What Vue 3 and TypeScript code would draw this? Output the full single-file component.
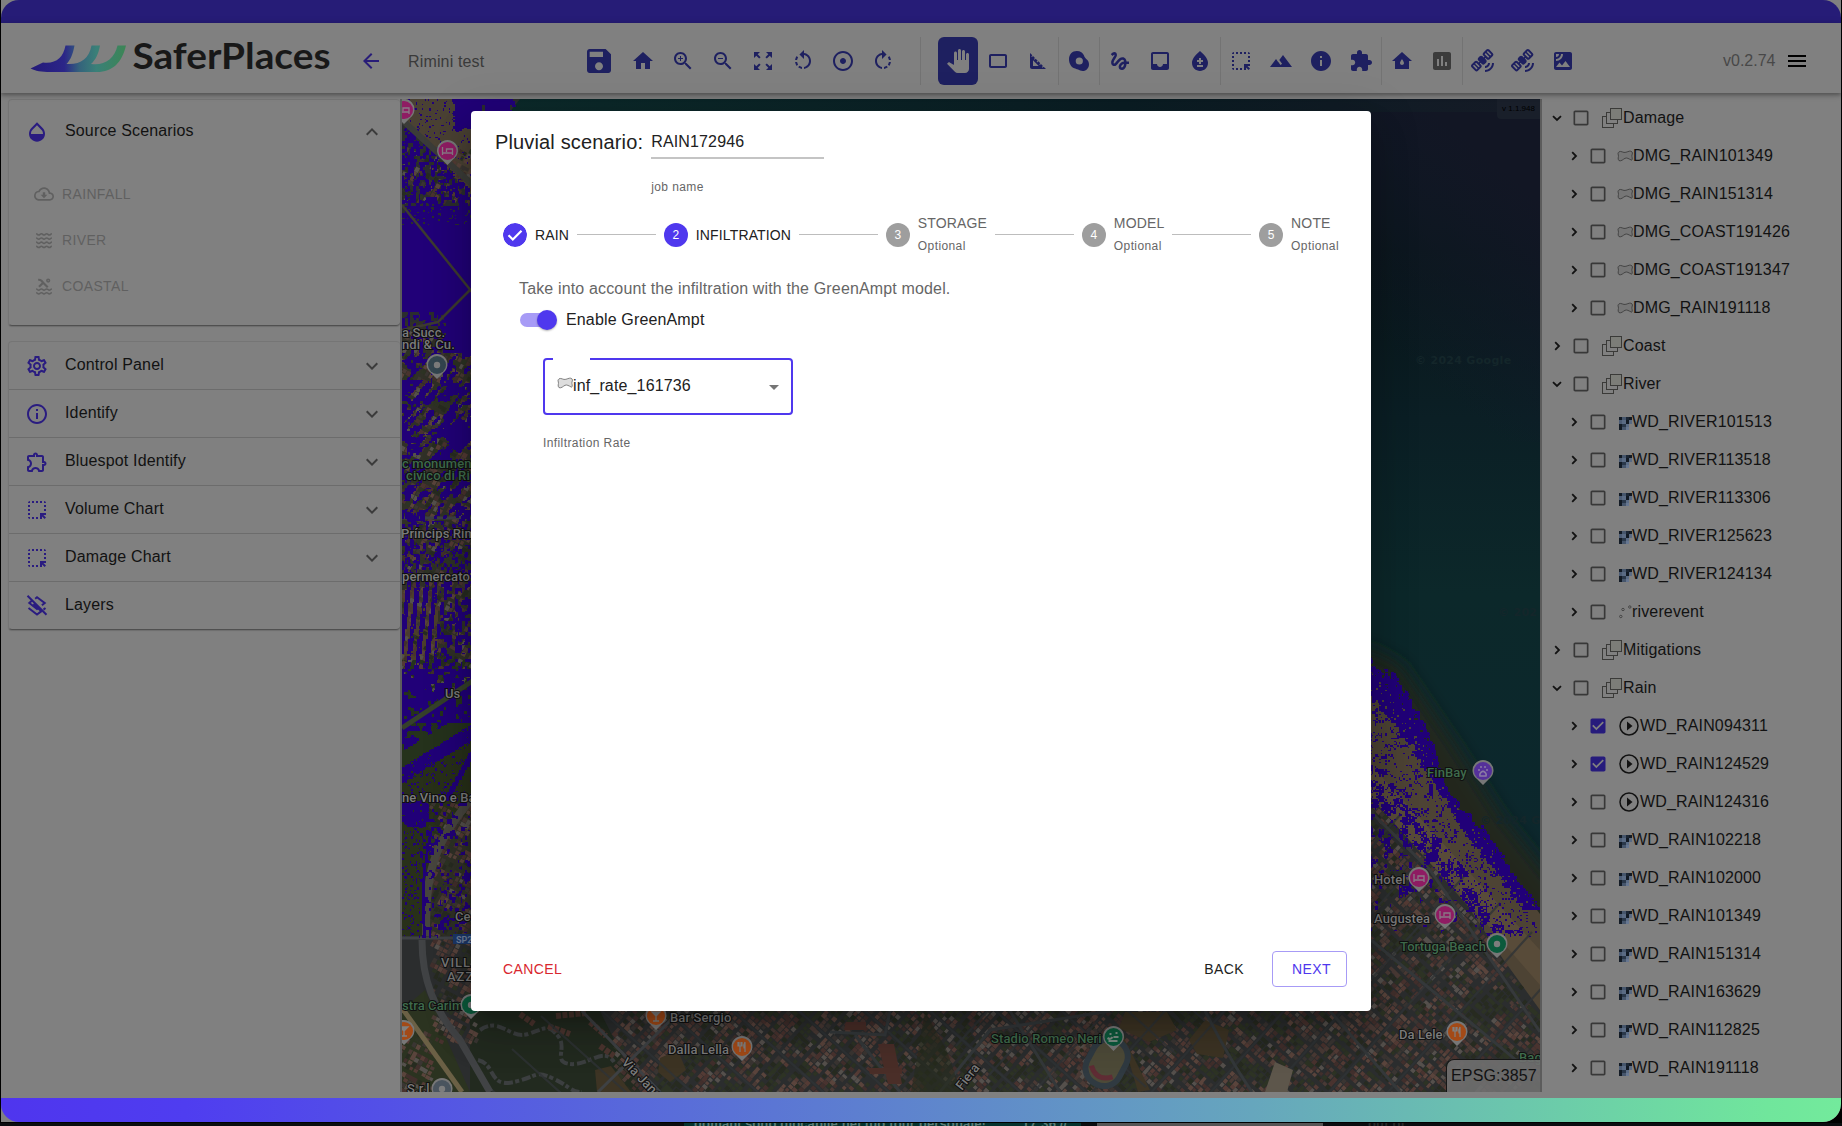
<script setup lang="ts">
interface Tool { icon: string; active?: boolean; muted?: boolean; divider?: boolean }
interface TreeRow { label: string; level: 0 | 1; open?: boolean; checked?: boolean; kind: 'group' | 'polygon' | 'raster' | 'points' | 'play' }
type Pt = [number, number]

const icons: Record<string, string> = {
  save: 'M17 3H5c-1.11 0-2 .9-2 2v14c0 1.1.89 2 2 2h14c1.1 0 2-.9 2-2V7l-4-4zm-5 16c-1.66 0-3-1.34-3-3s1.34-3 3-3 3 1.34 3 3-1.34 3-3 3zm3-10H5V5h10v4z',
  home: 'M10 20v-6h4v6h5v-8h3L12 3 2 12h3v8z',
  zoomIn: 'M15.5 14h-.79l-.28-.27C15.41 12.59 16 11.11 16 9.5 16 5.91 13.09 3 9.5 3S3 5.91 3 9.5 5.91 16 9.5 16c1.61 0 3.09-.59 4.23-1.57l.27.28v.79l5 4.99L20.49 19l-4.99-5zm-6 0C7.01 14 5 11.99 5 9.5S7.01 5 9.5 5 14 7.01 14 9.5 11.99 14 9.5 14zM12 10h-2v2H9v-2H7V9h2V7h1v2h2v1z',
  zoomOut: 'M15.5 14h-.79l-.28-.27C15.41 12.59 16 11.11 16 9.5 16 5.91 13.09 3 9.5 3S3 5.91 3 9.5 5.91 16 9.5 16c1.61 0 3.09-.59 4.23-1.57l.27.28v.79l5 4.99L20.49 19l-4.99-5zm-6 0C7.01 14 5 11.99 5 9.5S7.01 5 9.5 5 14 7.01 14 9.5 11.99 14 9.5 14zM7 9h5v1H7z',
  zoomMap: 'M15 3l2.3 2.3-2.89 2.87 1.42 1.42L18.7 6.7 21 9V3zM3 9l2.3-2.3 2.87 2.89 1.42-1.42L6.7 5.3 9 3H3zm6 12l-2.3-2.3 2.89-2.87-1.42-1.42L5.3 17.3 3 15v6zm12-6l-2.3 2.3-2.87-2.89-1.42 1.42 2.89 2.87L15 21h6z',
  rotateLeft: 'M7.11 8.53L5.7 7.11C4.8 8.27 4.24 9.61 4.07 11h2.02c.14-.87.49-1.72 1.02-2.47zM6.09 13H4.07c.17 1.39.72 2.73 1.62 3.89l1.41-1.42c-.52-.75-.87-1.59-1.01-2.47zm1.01 5.32c1.16.9 2.51 1.44 3.9 1.61V17.9c-.87-.15-1.71-.49-2.46-1.03L7.1 18.32zM13 4.07V1L8.45 5.55 13 10V6.09c2.84.48 5 2.94 5 5.91s-2.16 5.43-5 5.91v2.02c3.95-.49 7-3.85 7-7.93s-3.05-7.44-7-7.93z',
  adjust: 'M12 2C6.49 2 2 6.49 2 12s4.49 10 10 10 10-4.49 10-10S17.51 2 12 2zm0 18c-4.41 0-8-3.59-8-8s3.59-8 8-8 8 3.59 8 8-3.59 8-8 8zm3-8c0 1.66-1.34 3-3 3s-3-1.34-3-3 1.34-3 3-3 3 1.34 3 3z',
  rotateRight: 'M15.55 5.55L11 1v3.07C7.06 4.56 4 7.92 4 12s3.05 7.44 7 7.93v-2.02c-2.84-.48-5-2.94-5-5.91s2.16-5.43 5-5.91V10l4.55-4.45zM19.93 11c-.17-1.39-.72-2.73-1.62-3.89l-1.42 1.42c.54.75.88 1.6 1.02 2.47h2.02zM13 17.9v2.02c1.39-.17 2.74-.71 3.9-1.61l-1.44-1.44c-.75.54-1.59.89-2.46 1.03zm3.89-2.42l1.42 1.41c.9-1.16 1.45-2.5 1.62-3.89h-2.02c-.14.87-.48 1.72-1.02 2.48z',
  pan: 'M23 5.5V20c0 2.2-1.8 4-4 4h-7.3c-1.08 0-2.1-.43-2.85-1.19L1 14.83s1.26-1.23 1.3-1.25c.22-.19.49-.29.79-.29.22 0 .42.06.6.16.04.01 4.31 2.46 4.31 2.46V4c0-.83.67-1.5 1.5-1.5S11 3.17 11 4v7h1V1.5c0-.83.67-1.5 1.5-1.5S15 .67 15 1.5V11h1V2.5c0-.83.67-1.5 1.5-1.5s1.5.67 1.5 1.5V11h1V5.5c0-.83.67-1.5 1.5-1.5s1.5.67 1.5 1.5z',
  rect: 'M19 5H5c-1.1 0-2 .9-2 2v10c0 1.1.9 2 2 2h14c1.1 0 2-.9 2-2V7c0-1.1-.9-2-2-2zm0 12H5V7h14v10z',
  square: 'M17.66 17.66l-1.06 1.06-.71-.71 1.06-1.06-1.94-1.94-1.06 1.06-.71-.71 1.06-1.06-1.94-1.94-1.06 1.06-.71-.71 1.06-1.06L9.7 9.7l-1.06 1.06-.71-.71 1.06-1.06-1.94-1.94-1.06 1.06-.71-.71 1.06-1.06L4 4v14c0 1.1.9 2 2 2h14l-2.34-2.34zM7 17v-5.76L12.76 17H7z',
  blob: 'M9.8 2c3.6 0 6.2 1.7 7.2 4.6.4 1.4 1 2.2 2.2 3.3C21 11.3 22 13 22 15.2c0 3.9-2.7 6.8-6.3 6.8-2 0-3.1-.8-4.7-1.5-1.3-.5-2.3-.6-3.7-1.2C4 17.9 2 14.3 2 10.2 2 5.4 5.2 2 9.8 2zM12.300 8.400a3.600 3.600 0 1 0 0 7.200 3.600 3.600 0 0 0 0-7.200z',
  gesture: 'M4.59 6.89c.7-.71 1.4-1.35 1.71-1.22.5.2 0 1.03-.3 1.52-.25.42-2.86 3.89-2.86 6.31 0 1.28.48 2.34 1.34 2.98.75.56 1.74.73 2.64.46 1.07-.31 1.95-1.4 3.06-2.77 1.21-1.49 2.83-3.44 4.08-3.44 1.63 0 1.65 1.01 1.76 1.79-3.78.64-5.38 3.67-5.38 5.37 0 1.7 1.44 3.09 3.21 3.09 1.63 0 4.29-1.33 4.69-6.1H21v-2.5h-2.47c-.15-1.65-1.09-4.2-4.03-4.2-2.25 0-4.18 1.91-4.94 2.84-.58.73-2.06 2.48-2.29 2.72-.25.3-.68.84-1.11.84-.45 0-.72-.83-.36-1.92.35-1.09 1.4-2.86 1.85-3.52.78-1.14 1.3-1.92 1.3-3.28C8.95 3.69 7.31 3 6.44 3 5.12 3 3.97 4 3.72 4.25c-.36.36-.66.66-.88.93l1.75 1.71zm9.29 11.66c-.31 0-.74-.26-.74-.72 0-.6.73-2.2 2.87-2.76-.3 2.69-1.43 3.48-2.13 3.48z',
  inbox: 'M19 3H4.99c-1.11 0-1.98.89-1.98 2L3 19c0 1.1.88 2 1.99 2H19c1.1 0 2-.9 2-2V5c0-1.11-.9-2-2-2zm0 12h-4c0 1.66-1.35 3-3 3s-3-1.34-3-3H4.99V5H19v10z',
  drop: 'M12 2c-5.33 4.55-8 8.48-8 11.8 0 4.98 3.8 8.2 8 8.2s8-3.22 8-8.2c0-3.32-2.67-7.25-8-11.8zM15 18H9v-2h6v2zM15 13h-2v2h-2v-2H9v-2h2V9h2v2h2v2z',
  select: 'M17 5h-2V3h2v2zm-2 16h2v-2.59L19.59 21 21 19.59 18.41 17H21v-2h-6v6zm4-12h2V7h-2v2zm0 4h2v-2h-2v2zm-8 8h2v-2h-2v2zM7 5h2V3H7v2zM3 17h2v-2H3v2zm2 4v-2H3c0 1.1.9 2 2 2zM19 3v2h2c0-1.1-.9-2-2-2zm-8 2h2V3h-2v2zM3 9h2V7H3v2zm4 12h2v-2H7v2zm-4-8h2v-2H3v2zm0-8h2V3c-1.1 0-2 .9-2 2z',
  mountain: 'M14 6l-3.75 5 2.85 3.8-1.6 1.2C9.81 13.75 7 10 7 10l-6 8h22L14 6z',
  info: 'M12 2C6.48 2 2 6.48 2 12s4.48 10 10 10 10-4.48 10-10S17.52 2 12 2zm1 15h-2v-6h2v6zm0-8h-2V7h2v2z',
  puzzle: 'M20.5 11H19V7c0-1.1-.9-2-2-2h-4V3.5C13 2.12 11.88 1 10.5 1S8 2.12 8 3.5V5H4c-1.1 0-1.99.9-1.99 2v3.8H3.5c1.49 0 2.7 1.21 2.7 2.7s-1.21 2.7-2.7 2.7H2V20c0 1.1.9 2 2 2h3.8v-1.5c0-1.49 1.21-2.7 2.7-2.7 1.49 0 2.7 1.21 2.7 2.7V22H17c1.1 0 2-.9 2-2v-4h1.5c1.38 0 2.5-1.12 2.5-2.5S21.88 11 20.5 11z',
  waterHome: 'M12 3L2 12h3v8h14v-8h3L12 3zm0 13c-1.1 0-2-.9-2-2s2-4 2-4 2 2.9 2 4-.9 2-2 2z',
  assessment: 'M19 3H5c-1.1 0-2 .9-2 2v14c0 1.1.9 2 2 2h14c1.1 0 2-.9 2-2V5c0-1.1-.9-2-2-2zM9 17H7v-7h2v7zm4 0h-2V7h2v10zm4 0h-2v-4h2v4z',
  satellite: 'M21 14h2c0 4.97-4.03 9-9 9v-2c3.87 0 7-3.13 7-7zm-7 3v2c2.76 0 5-2.24 5-5h-2c0 1.66-1.34 3-3 3zM18.26.59l3.54 3.54c.78.78.78 2.05 0 2.83l-3.18 3.18c-.78.78-2.05.78-2.83 0l-1.24-1.24-.71.7 1.24 1.24c.78.78.78 2.05 0 2.83l-1.41 1.41c-.78.78-2.05.78-2.83 0L9.6 13.84l-.71.71 1.24 1.24c.78.78.78 2.05 0 2.83L6.95 21.8c-.78.78-2.05.78-2.83 0L.58 18.26c-.78-.78-.78-2.05 0-2.83l3.18-3.18c.78-.78 2.05-.78 2.83 0l1.24 1.24.71-.71-1.24-1.23c-.78-.78-.78-2.05 0-2.83L8.71 7.3c.78-.78 2.05-.78 2.83 0l1.24 1.24.71-.71-1.24-1.24c-.78-.78-.78-2.05 0-2.83L15.43.59c.79-.79 2.05-.79 2.83 0zM16.84 2l-1.06 1.06 3.54 3.54 1.06-1.06L16.84 2zM14.72 4.12l-1.06 1.06 3.54 3.54 1.06-1.06-3.54-3.54zM5.17 13.67L4.11 14.73l3.54 3.54 1.06-1.06-3.54-3.54zM3.05 15.79L1.99 16.85l3.54 3.54 1.06-1.06-3.54-3.54z',
  imagery: 'M19 3H5c-1.1 0-2 .9-2 2v14c0 1.1.9 2 2 2h14c1.1 0 2-.9 2-2V5c0-1.1-.9-2-2-2zM5 4.99h3C8 6.65 6.66 8 5 8V4.99zM5 12v-2c2.76 0 5-2.25 5-5.01h2C12 8.86 8.87 12 5 12zm0 6l3.5-4.5 2.5 3.01L14.5 12l4.5 6H5z',
  back: 'M20 11H7.83l5.59-5.59L12 4l-8 8 8 8 1.41-1.41L7.83 13H20v-2z',
  menu: 'M3 18h18v-2H3v2zm0-5h18v-2H3v2zm0-7v2h18V6H3z',
  opacity: 'M17.66 8L12 2.35 6.34 8C4.78 9.56 4 11.64 4 13.64s.78 4.11 2.34 5.67 3.61 2.35 5.66 2.35 4.1-.79 5.66-2.35S20 15.64 20 13.64 19.22 9.56 17.66 8zM6 14c.01-2 .62-3.27 1.76-4.4L12 5.27l4.24 4.38C17.38 10.77 17.99 12 18 14H6z',
  up: 'M12 8l-6 6 1.41 1.41L12 10.83l4.59 4.58L18 14z',
  down: 'M16.59 8.59L12 13.17 7.41 8.59 6 10l6 6 6-6z',
  cloud: 'M19.35 10.04C18.67 6.59 15.64 4 12 4 9.11 4 6.6 5.64 5.35 8.04 2.34 8.36 0 10.91 0 14c0 3.31 2.69 6 6 6h13c2.76 0 5-2.24 5-5 0-2.64-2.05-4.78-4.65-4.96zM19 18H6c-2.21 0-4-1.79-4-4 0-2.05 1.53-3.76 3.56-3.97l1.07-.11.5-.95C8.08 7.14 9.94 6 12 6c2.62 0 4.88 1.86 5.39 4.43l.3 1.5 1.53.11c1.56.1 2.78 1.41 2.78 2.96 0 1.65-1.35 3-3 3zm-5.55-8h-2.9v3H8l4 4 4-4h-2.55z',
  settings: 'M19.43 12.98c.04-.32.07-.64.07-.98 0-.34-.03-.66-.07-.98l2.11-1.65c.19-.15.24-.42.12-.64l-2-3.46c-.09-.16-.26-.25-.44-.25-.06 0-.12.01-.17.03l-2.49 1c-.52-.4-1.08-.73-1.69-.98l-.38-2.65C14.46 2.18 14.25 2 14 2h-4c-.25 0-.46.18-.49.42l-.38 2.65c-.61.25-1.17.59-1.69.98l-2.49-1c-.06-.02-.12-.03-.18-.03-.17 0-.34.09-.43.25l-2 3.46c-.13.22-.07.49.12.64l2.11 1.65c-.04.32-.07.65-.07.98 0 .33.03.66.07.98l-2.11 1.65c-.19.15-.24.42-.12.64l2 3.46c.09.16.26.25.44.25.06 0 .12-.01.17-.03l2.49-1c.52.4 1.08.73 1.69.98l.38 2.65c.03.24.24.42.49.42h4c.25 0 .46-.18.49-.42l.38-2.65c.61-.25 1.17-.59 1.69-.98l2.49 1c.06.02.12.03.18.03.17 0 .34-.09.43-.25l2-3.46c.12-.22.07-.49-.12-.64l-2.11-1.65zm-1.98-1.71c.04.31.05.52.05.73 0 .21-.02.43-.05.73l-.14 1.13.89.7 1.08.84-.7 1.21-1.27-.51-1.04-.42-.9.68c-.43.32-.84.56-1.25.73l-1.06.43-.16 1.13-.2 1.35h-1.4l-.19-1.35-.16-1.13-1.06-.43c-.43-.18-.83-.41-1.23-.71l-.91-.7-1.06.43-1.27.51-.7-1.21 1.08-.84.89-.7-.14-1.13c-.03-.31-.05-.54-.05-.74s.02-.43.05-.73l.14-1.13-.89-.7-1.08-.84.7-1.21 1.27.51 1.04.42.9-.68c.43-.32.84-.56 1.25-.73l1.06-.43.16-1.13.2-1.35h1.39l.19 1.35.16 1.13 1.06.43c.43.18.83.41 1.23.71l.91.7 1.06-.43 1.27-.51.7 1.21-1.07.85-.89.7.14 1.13zM12 8c-2.21 0-4 1.79-4 4s1.79 4 4 4 4-1.79 4-4-1.79-4-4-4zm0 6c-1.1 0-2-.9-2-2s.9-2 2-2 2 .9 2 2-.9 2-2 2z',
  infoOutline: 'M11 7h2v2h-2zm0 4h2v6h-2zm1-9C6.48 2 2 6.48 2 12s4.48 10 10 10 10-4.48 10-10S17.52 2 12 2zm0 18c-4.41 0-8-3.59-8-8s3.59-8 8-8 8 3.59 8 8-3.59 8-8 8z',
  puzzleOutline: 'M10.5 4.5c.28 0 .5.22.5.5v2h6v6h2c.28 0 .5.22.5.5s-.22.5-.5.5h-2v6h-2.12c-.68-1.75-2.39-3-4.38-3s-3.7 1.25-4.38 3H4v-2.12c1.75-.68 3-2.39 3-4.38 0-1.99-1.24-3.7-2.99-4.38L4 7h6V5c0-.28.22-.5.5-.5m0-2C9.12 2.5 8 3.62 8 5H4c-1.1 0-1.99.9-1.99 2v3.8h.29c1.49 0 2.7 1.21 2.7 2.7s-1.21 2.7-2.7 2.7H2V20c0 1.1.9 2 2 2h3.8v-.3c0-1.49 1.21-2.7 2.7-2.7s2.7 1.21 2.7 2.7v.3H17c1.1 0 2-.9 2-2v-4c1.38 0 2.5-1.12 2.5-2.5S20.38 11 19 11V7c0-1.1-.9-2-2-2h-4c0-1.38-1.12-2.5-2.5-2.5z',
  box: 'M19 5v14H5V5h14m0-2H5c-1.1 0-2 .9-2 2v14c0 1.1.9 2 2 2h14c1.1 0 2-.9 2-2V5c0-1.1-.9-2-2-2z',
  boxChecked: 'M19 3H5c-1.11 0-2 .9-2 2v14c0 1.1.89 2 2 2h14c1.11 0 2-.9 2-2V5c0-1.1-.89-2-2-2zm-9 14l-5-5 1.41-1.41L10 14.17l7.59-7.59L19 8l-9 9z',
  waves: 'M2.5 4.5c1.6 0 1.6 1.5 3.2 1.5s1.6-1.5 3.2-1.5S10.4 6 12 6s1.6-1.5 3.2-1.5S16.8 6 18.4 6s1.5-1.5 3.1-1.5M2.5 9.5c1.6 0 1.6 1.5 3.2 1.5s1.6-1.5 3.2-1.5S10.4 11 12 11s1.6-1.5 3.2-1.5 1.6 1.5 3.2 1.5 1.5-1.5 3.1-1.5M2.5 14.5c1.6 0 1.6 1.5 3.2 1.5s1.6-1.5 3.2-1.5S10.4 16 12 16s1.6-1.5 3.2-1.5 1.6 1.5 3.2 1.5 1.5-1.5 3.1-1.5M2.5 19.5c1.6 0 1.6 1.5 3.2 1.5s1.6-1.5 3.2-1.5S10.4 21 12 21s1.6-1.5 3.2-1.5 1.6 1.5 3.2 1.5 1.5-1.5 3.1-1.5',
}
const polygonShape = 'M1.5 1.5C4 0 6 3 9 2s5-2 6.5-.5-.5 3 0 5 .5 4-.5 4C12 9 10 7.500 8 8.500S4 12 1.500 11C-.5 9 1.500 7 .8 5S.5 2.500 1.500 1.500z'

const viewTools: Tool[] = [
  { icon: 'home' }, { icon: 'zoomIn' }, { icon: 'zoomOut' }, { icon: 'zoomMap' },
  { icon: 'rotateLeft' }, { icon: 'adjust' }, { icon: 'rotateRight' },
]
const editTools: Tool[] = [
  { icon: 'pan', active: true }, { icon: 'rect' }, { icon: 'square' },
  { icon: 'blob', divider: true },
  { icon: 'gesture', divider: true }, { icon: 'inbox' }, { icon: 'drop' },
  { icon: 'select', divider: true }, { icon: 'mountain' }, { icon: 'info' }, { icon: 'puzzle' },
  { icon: 'waterHome', divider: true }, { icon: 'assessment', muted: true },
  { icon: 'satellite', divider: true }, { icon: 'satellite' }, { icon: 'imagery' },
]
const panels = [
  { label: 'Control Panel', icon: 'settings' },
  { label: 'Identify', icon: 'infoOutline' },
  { label: 'Bluespot Identify', icon: 'puzzleOutline' },
  { label: 'Volume Chart', icon: 'select' },
  { label: 'Damage Chart', icon: 'select' },
  { label: 'Layers', icon: '' },
]
const leaf = (kind: TreeRow['kind'], checked = false) => (label: string): TreeRow => ({ label, level: 1, kind, checked })
const tree: TreeRow[] = [
  { label: 'Damage', level: 0, kind: 'group', open: true },
  ...['DMG_RAIN101349', 'DMG_RAIN151314', 'DMG_COAST191426', 'DMG_COAST191347', 'DMG_RAIN191118'].map(leaf('polygon')),
  { label: 'Coast', level: 0, kind: 'group' },
  { label: 'River', level: 0, kind: 'group', open: true },
  ...['WD_RIVER101513', 'WD_RIVER113518', 'WD_RIVER113306', 'WD_RIVER125623', 'WD_RIVER124134'].map(leaf('raster')),
  leaf('points')('riverevent'),
  { label: 'Mitigations', level: 0, kind: 'group' },
  { label: 'Rain', level: 0, kind: 'group', open: true },
  ...['WD_RAIN094311', 'WD_RAIN124529'].map(leaf('play', true)),
  leaf('play')('WD_RAIN124316'),
  ...['WD_RAIN102218', 'WD_RAIN102000', 'WD_RAIN101349', 'WD_RAIN151314', 'WD_RAIN163629', 'WD_RAIN112825', 'WD_RAIN191118'].map(leaf('raster')),
]
const steps = [
  { label: 'RAIN', state: 'done' },
  { label: 'INFILTRATION', state: 'active' },
  { label: 'STORAGE', state: 'todo' },
  { label: 'MODEL', state: 'todo' },
  { label: 'NOTE', state: 'todo' },
]
const rasterCells = [
  [0, 0, '#121a24'], [1, 0, '#46566c'], [2, 0, '#1b2634'], [3, 0, '#121a24'],
  [0, 1, '#4c5c74'], [1, 1, '#5a6b84'], [2, 1, '#121a24'], [3, 1, '#5a6b84'],
  [0, 2, '#121a24'], [1, 2, '#2a384a'], [2, 2, '#5a6b84'],
  [0, 3, '#121a24'], [1, 3, '#46566c'], [2, 3, '#667690'],
] as [number, number, string][]

/* ---------- map scene ---------- */
function hash(x: number, y: number): number {
  let h = (Math.imul(x | 0, 374761393) + Math.imul(y | 0, 668265263)) | 0
  h = Math.imul(h ^ (h >>> 13), 1274126177)
  return ((h ^ (h >>> 16)) >>> 0) / 4294967296
}
function noise(x: number, y: number): number {
  const xi = Math.floor(x), yi = Math.floor(y)
  const fx = x - xi, fy = y - yi
  const u = fx * fx * (3 - 2 * fx), v = fy * fy * (3 - 2 * fy)
  const a = hash(xi, yi) * (1 - u) + hash(xi + 1, yi) * u
  const b = hash(xi, yi + 1) * (1 - u) + hash(xi + 1, yi + 1) * u
  return a * (1 - v) + b * v
}
function along(points: Pt[], x: number): number {
  for (let i = 1; i < points.length; i++) {
    const [x0, y0] = points[i - 1], [x1, y1] = points[i]
    if (x <= x1) return y0 + ((x - x0) / (x1 - x0)) * (y1 - y0)
  }
  return points[points.length - 1][1]
}
const outer: Pt[] = [[1370, 660], [1376, 668], [1395, 675], [1417, 710], [1433, 747], [1448, 792], [1460, 805], [1490, 836], [1510, 870], [1540, 908]]
const inner: Pt[] = [[1370, 696], [1410, 744], [1457, 822], [1507, 888], [1540, 930]]
const inland: Pt[] = [[1370, 798], [1393, 822], [1427, 860], [1467, 905], [1503, 959], [1540, 1010]]

const roofColors = ['#49332f', '#543b35', '#412f2c', '#5a443c', '#4a3a35', '#55504c', '#272b20', '#3a3532', '#2d3324']
const roofs: string[] = roofColors.map(() => '')
let lanes = ''
/* lays out rows of small roofs on a rotated street lattice */
function city(x0: number, y0: number, x1: number, y1: number, deg: number, inside: (x: number, y: number) => boolean) {
  const a = (deg * Math.PI) / 180, c = Math.cos(a), s = Math.sin(a)
  const cx = (x0 + x1) / 2, cy = (y0 + y1) / 2
  const r = Math.hypot(x1 - x0, y1 - y0) / 2
  const n = Math.ceil(r / 4.5)
  for (let j = -n; j <= n; j++) {
    for (let i = -n; i <= n; i++) {
      const u = i * 4.5 + Math.floor(i / 9) * 3.500, v = j * 5 + Math.floor(j / 4) * 3
      const x = cx + u * c - v * s, y = cy + u * s + v * c
      if (x < x0 - 4 || x > x1 + 4 || y < y0 - 4 || y > y1 + 4 || !inside(x, y)) continue
      const h = hash(i + 400, j + 900 + x0)
      if (h < 0.05) continue
      const green = noise(x / 16, y / 16) > 0.74
      const k = green ? (h > 0.5 ? 6 : 8) : Math.floor(((h - 0.05) / 0.95) * 8.99)
      const w = 3 + hash(i, j) * 1.8, l = 3.2 + hash(j, i) * 2
      roofs[k] += `M${x.toFixed(1)} ${y.toFixed(1)}l${(w * c).toFixed(1)} ${(w * s).toFixed(1)}l${(-l * s).toFixed(1)} ${(l * c).toFixed(1)}l${(-w * c).toFixed(1)} ${(-w * s).toFixed(1)}z`
    }
  }
  if (x1 - x0 < 300) return
  for (let k = -Math.ceil(r / 44); k <= Math.ceil(r / 44); k++) {
    const u = k * 44 - 1.800
    lanes += `M${(cx + u * c + r * s).toFixed(0)} ${(cy + u * s - r * c).toFixed(0)}L${(cx + u * c - r * s).toFixed(0)} ${(cy + u * s + r * c).toFixed(0)}`
  }
}
city(402, 150, 474, 1092, 28, (x, y) => y < 200 || (y > 330 && y < 690) || (y > 800 && x > 428 + (y - 800) * 0.02 && y < 1040) || (y > 1030 && x < 432))
city(600, 1008, 1090, 1092, -48, (x) => x > 610)
city(1080, 1006, 1542, 1092, 42, (x, y) => x < 1371 || y > along(inland, x))
city(1368, 790, 1542, 1010, 44, (x, y) => y > along(inland, x) && y < 1004)

const step = 1.5
function floods(x: number, y: number): boolean {
  const h = hash(Math.round(x / step), Math.round(y / step))
  if (x > 1300) {
    const edge = along(outer, x) + (noise(x / 3, y / 3) - 0.5) * 12
    const low = along(inner, x) + (noise(x / 4, y / 4) - 0.5) * 12
    if (y < edge) return false
    if (y < low) return h > 0.07
    const land = along(inland, x)
    if (y < land) return h < 0.08 + (noise(x / 5, y / 5) > 0.7 ? 0.55 : 0) + (land - y < 34 && noise(x / 6, y / 9) > 0.52 ? 0.7 : 0)
    return noise(x / 5, y / 5) > 0.56 + (y - 800) / 420 && h > 0.2
  }
  if (y < 112 && x > 474) return x < 517 - noise(x / 3, y / 3) * 8 && !(x > 480 && x < 484 && y > 104)
  const n = noise(x / 4, y / 4), f = noise(x / 2.6, y / 3.4), m = noise(x / 11 + 40, y / 11)
  if (y < 190 && x - 402 > (y - 118) * 0.95) return x > 455 - n * 6 && y < 124 + n * 8 ? true : h < 0.07
  if (y < 225) return f > 0.34 + (y > 205 ? -0.15 : 0.08) && h > 0.05
  if (y < 312) return true
  if (y < 352) return x > 438 + n * 8 || f > 0.55
  if (y < 520) {
    if (Math.abs(x - 458) + Math.abs(y - 434) * 0.9 < 17) return true
    return noise((x + y) / 5, (x - y) / 16) > (m > 0.5 ? 0.42 : 0.58) && f > 0.2
  }
  if (y < 578) return f > 0.55 && h > 0.12
  if (y < 668) return x < 436 ? Math.sin((x + y * 0.12) * 0.7) > -0.1 && h > 0.08 : f > 0.56
  if (y < 722) return n < 0.74
  if (y < 800) {
    const d = y - (778 - (x - 402) * 0.62)
    if (Math.abs(d + 4) < 8) return h > 0.05
    if (d < -12) return d > -28 ? false : n > 0.5
    return h < 0.1 || (x > 440 && Math.abs(x - (500 - (y - 700) * 0.55)) < 3)
  }
  if (y < 826) return x < 432 && Math.hypot(x - 414, (y - 811) * 0.9) < 15 ? h > 0.04 : n > 0.72
  if (y < 937) return Math.abs(x - (422 + Math.pow((900 - y) / 24, 2))) < 1.5 || (x < 420 ? h < 0.14 : f > 0.68)
  return false
}
function floodPath(x0: number, y0: number, x1: number, y1: number): string {
  let d = ''
  for (let y = y0; y < y1; y += step) {
    let start = -1
    for (let x = x0; x <= x1; x += step) {
      const on = x < x1 && floods(x, y)
      if (on && start < 0) start = x
      else if (!on && start >= 0) { d += `M${start} ${y}H${x}v${step}H${start}z`; start = -1 }
    }
  }
  return d
}
const floodPaths = [floodPath(402, 99, 474, 937), floodPath(474, 99, 520, 112), floodPath(1370, 655, 1540, 937)]

const pins = [
  { x: 404, y: 110, c: '#8f1c63', g: 'bed' }, { x: 447.5, y: 151, c: '#8f1c63', g: 'bed' },
  { x: 437, y: 365, c: '#33454f', g: 'dot' }, { x: 471, y: 1005, c: '#0b5a3c', g: 'dot' },
  { x: 404, y: 1031, c: '#a34a17', g: 'bar' }, { x: 442, y: 1089, c: '#4a545e', g: 'dot' },
  { x: 656, y: 1016, c: '#a34a17', g: 'bar' }, { x: 742, y: 1047, c: '#a34a17', g: 'fork' },
  { x: 1113.5, y: 1037, c: '#0b5a3c', g: 'fans' }, { x: 1457, y: 1032, c: '#a34a17', g: 'fork' },
  { x: 1497, y: 944, c: '#0b5a3c', g: 'dot' }, { x: 1483, y: 771, c: '#55309a', g: 'paw' },
  { x: 1419, y: 878, c: '#8f1c63', g: 'bed' }, { x: 1445, y: 915, c: '#8f1c63', g: 'bed' },
]
const labels = [
  { x: 402, y: 337, t: 'a Succ.' }, { x: 402, y: 349, t: 'ndi & Cu.' },
  { x: 402, y: 468, t: 'c monumen', g: 1 }, { x: 406, y: 480, t: 'civico di Ri', g: 1 },
  { x: 401, y: 538, t: 'Príncips Rimin' }, { x: 402, y: 581, t: 'permercato' },
  { x: 445, y: 698, t: 'Us' }, { x: 402, y: 802, t: 'ne Vino e Bar' }, { x: 455, y: 921, t: 'Ce' },
  { x: 402, y: 1010, t: 'stra Carim', g: 1 }, { x: 407, y: 1093, t: 'S.r.l' },
  { x: 670, y: 1022, t: 'Bar Sergio' }, { x: 668, y: 1054, t: 'Dalla Lella' },
  { x: 991, y: 1043, t: 'Stadio Romeo Neri', g: 1 }, { x: 1399, y: 1039, t: 'Da Lele' },
  { x: 1400, y: 951, t: 'Tortuga Beach', g: 1 }, { x: 1427, y: 777, t: 'FinBay', g: 1 },
  { x: 1374, y: 884, t: 'Hotel' }, { x: 1374, y: 923, t: 'Augustea' }, { x: 1519, y: 1062, t: 'Bag', g: 1 },
]
</script>

<template>
  <div class="page">
    <div class="window">
      <div class="topbar"></div>
      <header class="header">
        <svg class="logo" width="304" height="44" viewBox="28 39 304 44">
          <defs>
            <linearGradient id="lg" x1="30" y1="0" x2="125" y2="0" gradientUnits="userSpaceOnUse">
              <stop offset="0" stop-color="#241a78" /><stop offset=".36" stop-color="#2b2588" />
              <stop offset=".52" stop-color="#34637c" /><stop offset=".7" stop-color="#3a8078" /><stop offset="1" stop-color="#3c8556" />
            </linearGradient>
          </defs>
          <path d="M30.500 68.500L43 62.500C56 64 63 58 65.500 45.500H74.500C73 54 70.500 60 66.500 64C80 65 89 59 91.500 45.500H100C98.500 54 95.500 60 91 64C104 66 114.500 59 117.500 45.500H126C122 63 112 72.500 96 72H50C42 72 35 71 30.500 68.500z" fill="url(#lg)" />
          <text x="132.500" y="69" textLength="198" lengthAdjust="spacingAndGlyphs" class="brand">SaferPlaces</text>
        </svg>
        <svg class="ico back" viewBox="0 0 24 24"><path :d="icons.back" /></svg>
        <span class="project">Rimini test</span>
        <div class="tools">
          <span class="tool big"><svg viewBox="0 0 24 24"><path :d="icons.save" /></svg></span>
          <span v-for="t in viewTools" :key="t.icon" class="tool"><svg viewBox="0 0 24 24"><path :d="icons[t.icon]" /></svg></span>
          <i class="sep wide"></i>
          <template v-for="(t, i) in editTools" :key="i">
            <i v-if="t.divider" class="sep"></i>
            <span class="tool" :class="{ active: t.active, muted: t.muted }"><svg viewBox="0 0 24 24"><path :d="icons[t.icon]" fill-rule="evenodd" /></svg></span>
          </template>
        </div>
        <span class="version">v0.2.74</span>
        <svg class="ico menu" viewBox="0 0 24 24"><path :d="icons.menu" /></svg>
      </header>

      <div class="body">
        <aside class="left">
          <section class="card sources">
            <div class="row head">
              <svg class="ico violet" viewBox="0 0 24 24"><path :d="icons.opacity" /></svg>
              <span>Source Scenarios</span>
              <svg class="ico chev" viewBox="0 0 24 24"><path :d="icons.up" /></svg>
            </div>
            <div class="source"><svg viewBox="0 0 24 24"><path :d="icons.cloud" /></svg>RAINFALL</div>
            <div class="source"><svg viewBox="0 0 24 24" class="line"><path :d="icons.waves" /></svg>RIVER</div>
            <div class="source">
              <svg viewBox="0 0 24 24" class="line">
                <path d="M2.500 15.500c1.600 0 1.600 1.500 3.200 1.500s1.600-1.500 3.200-1.500S10.400 17 12 17s1.600-1.500 3.200-1.500 1.600 1.500 3.200 1.500 1.500-1.500 3.100-1.500M2.500 20c1.600 0 1.600 1.500 3.200 1.500s1.600-1.500 3.200-1.500 1.500 1.500 3.100 1.500 1.600-1.500 3.200-1.500 1.600 1.500 3.200 1.500 1.500-1.500 3.100-1.500" />
                <path d="M6 13l5-5-2-2.200c-1-1-2.400-1.400-4-1.300M11 8l5.500 5.500" stroke-width="2.600" /><circle cx="17" cy="5.500" r="1.600" />
              </svg>COASTAL
            </div>
          </section>
          <section class="card">
            <div v-for="p in panels" :key="p.label" class="row">
              <svg v-if="p.icon" class="ico violet" viewBox="0 0 24 24"><path :d="icons[p.icon]" /></svg>
              <svg v-else class="ico violet layers" viewBox="0 0 24 24"><path d="M6.500 7L4.300 9l7.700 6 1.600-1.200M10.200 4.700L12 3.300 19.700 9l-2.800 2.200M8.500 9.500l7 7M3.500 14l8.500 6.600 4.500-3.500M18.500 15.600l2-1.600M2.500 1.800l19 19" /></svg>
              <span>{{ p.label }}</span>
              <svg v-if="p.icon" class="ico chev" viewBox="0 0 24 24"><path :d="icons.down" /></svg>
            </div>
          </section>
        </aside>

        <main class="map">
          <svg width="1138" height="993" viewBox="402 99 1138 993">
            <defs>
              <linearGradient id="sea" x1="0" y1="99" x2="0" y2="860" gradientUnits="userSpaceOnUse">
                <stop offset="0" stop-color="#0f1620" /><stop offset=".2" stop-color="#0a161a" />
                <stop offset=".42" stop-color="#0b1f25" /><stop offset=".65" stop-color="#0c282a" /><stop offset="1" stop-color="#0c272d" />
              </linearGradient>
              <linearGradient id="seaTop" x1="500" y1="0" x2="1540" y2="0" gradientUnits="userSpaceOnUse">
                <stop offset="0" stop-color="#0c2a2a" /><stop offset=".6" stop-color="#0b1e24" /><stop offset="1" stop-color="#151a26" />
              </linearGradient>
              <linearGradient id="navy" x1="1371" y1="400" x2="1540" y2="200" gradientUnits="userSpaceOnUse">
                <stop offset=".2" stop-color="#111a2b" stop-opacity="0" /><stop offset="1" stop-color="#121624" />
              </linearGradient>
              <filter id="soft" x="-20%" y="-20%" width="140%" height="140%"><feGaussianBlur stdDeviation="9" /></filter>
            </defs>
            <rect x="402" y="99" width="1138" height="993" fill="url(#sea)" />
            <rect x="500" y="99" width="1040" height="13" fill="url(#seaTop)" />
            <rect x="1371" y="112" width="169" height="330" fill="url(#navy)" />
            <path d="M1360 645L1400 665 1455 745 1500 815 1560 890V960L1360 720z" fill="#22281c" filter="url(#soft)" />
            <path d="M1371 672L1412 716 1448 796 1490 846 1540 914V1020L1460 940 1371 812z" fill="#4d4334" />
            <path d="M1371 765L1440 840 1540 950V985L1470 905 1371 800z" fill="#584b39" />
            <!-- built-up ground -->
            <path d="M1371 798L1393 822 1427 860 1467 905 1503 959 1540 1010V1092H402V99H520L480 150V1005H1371z" fill="#2b2d2e" />
            <path d="M402 99H474V200L402 118z" fill="#4a4133" />
            <path d="M402 322H474V936H402z" fill="#303027" />
            <path d="M402 660H474V740L402 800z" fill="#25321c" />
            <path d="M402 775L474 725V810L440 830 425 936H402z" fill="#283019" />
            <path d="M402 590H438V660H402z" fill="#4c3f2b" />
            <path d="M402 1010L425 990 470 1092H402z" fill="#2b3320" />
            <path d="M470 1011H600L640 1092H470z" fill="#222a1f" />
            <path v-for="(d, i) in roofs" :key="i" :d="d" :fill="roofColors[i]" />
            <path d="M1125 1012h42l10 18-28 12-30-14z M1205 1020l24 10-6 28-26-4-8-14z M660 1058l18-8 8 20-16 12-12-10z M595 1070l16-4 20 26h-34z M1120 1030l30 60-12 2z" fill="#3d3424" />
            <path d="M480 1030c20-14 30 10 48 4s20-10 30 2-6 26 12 28 34-18 44-2M478 1060c18 4 10 28 36 22s20-12 38-4 18 14 30 14" fill="none" stroke="#3c3f40" stroke-width="4" stroke-dasharray="9 2 4 3" />
            <path d="M556 1016l30-3M520 1014l14 10M590 1022l16 14M548 1026l22 8M600 1046l14 10" stroke="#4c352f" stroke-width="6" stroke-dasharray="5 1.500" fill="none" />
            <path :d="lanes" stroke="#2f3336" stroke-width="2.200" fill="none" opacity=".8" />
            <g fill="none" stroke="#3e4144" stroke-width="3">
              <path d="M582 1011L660 1092M598 1092L680 1011M402 938H474M402 518H474" />
              <path d="M1205 1011Q1230 1060 1252 1092M1371 940L1540 1080M1400 1092L1330 1011M1010 1011L1060 1092M890 1011L885 1035 830 1032M855 1035L900 1092M940 1092L990 1030 1110 1011" stroke="#34383a" />
              <path d="M1371 812L1430 870 1540 1032" stroke="#36393b" />
            </g>
            <path d="M878 1044h16l8 40h-14z M846 1022h20v8h-22z M868 1068h34v6h-32z" fill="#4a2e28" />
            <path d="M925 1011l22 40 14 41h-50z" fill="#262c1c" opacity=".6" />
            <path d="M402 1008L462 1092" stroke="#6b6045" stroke-width="5" />
            <path d="M422 940c0 40 12 70 38 100l30 52" stroke="#414345" stroke-width="7" fill="none" />
            <path d="M426 936c0-60 4-90 48-140" stroke="#47453e" stroke-width="8" fill="none" />
            <g transform="rotate(28 1108 1062)"><rect x="1086" y="1036" width="42" height="54" rx="20" fill="#303a41" /><rect x="1092" y="1042" width="30" height="42" rx="14" fill="#4d4a38" /><path d="M1095 1073q12 12 24 0" stroke="#5f2c34" stroke-width="5" fill="none" /></g>
            <path d="M1275 1062l18 8-6 22h-22z" fill="#5d564b" />
            <g shape-rendering="crispEdges" fill="#210078"><path v-for="(d, i) in floodPaths" :key="i" :d="d" /></g>
            <path d="M402 120L474 186" stroke="#3b3c38" stroke-width="6" />
            <path d="M402 205L472 292M470 290L438 322 402 330" stroke="#3d3b30" stroke-width="2.500" fill="none" />
            <path d="M402 728L474 680" stroke="#35402a" stroke-width="5" />
            <rect x="453" y="934" width="30" height="10" fill="#1c3768" />
            <text x="456" y="943" class="shield">SP2</text>
            <text v-for="(l, i) in labels" :key="'l' + i" :x="l.x" :y="l.y" class="place" :class="{ green: l.g }">{{ l.t }}</text>
            <text x="441" y="967" class="district">VILLA</text><text x="447" y="981" class="district">AZZ</text>
            <text class="place" transform="translate(621 1063) rotate(46)">Via Jano</text>
            <text class="place" transform="translate(962 1091) rotate(-52)">Fiera</text>
            <text x="1415" y="364" class="credit">© 2024 Google</text>
            <text x="1498" y="616" class="credit">© 202</text>
            <text x="1480" y="824" class="credit">© 2024 G</text>
            <g v-for="(p, i) in pins" :key="'p' + i" :transform="`translate(${p.x} ${p.y})`">
              <path d="M0 14L-6 8A10.500 10.500 0 1 1 6 8z" fill="#777" /><circle r="9" :fill="p.c" />
              <circle v-if="p.g === 'dot'" r="3.200" fill="#7d7d7d" />
              <path v-else-if="p.g === 'bed'" d="M-5-4V4M-5 2H5V4M5 2V-2H-1V1" stroke="#8a7a86" stroke-width="1.300" fill="none" />
              <path v-else-if="p.g === 'bar'" d="M-4-4H4L0 0zM0 0V5M-3 5H3" stroke="#808080" stroke-width="1.300" fill="#808080" />
              <path v-else-if="p.g === 'fork'" d="M-3-5V-1M-1-5V-1M-4-5V-1H0V-5M-2-1V5M3-5V5M3-5Q1-2 2 1H3" stroke="#808080" stroke-width="1.200" fill="none" />
              <path v-else-if="p.g === 'fans'" d="M-4-3h2M2-4h2M-6 1q3 2 5-1M0 0h5M-5 4H4" stroke="#7d8d85" stroke-width="2.200" fill="none" />
              <path v-else d="M0 0q4 2 3 5H-3Q-4 2 0 0M-5-1h2M-3-4h2M1-4h2M3-1h2" stroke="#8a7aa5" stroke-width="1.600" fill="none" />
            </g>
          </svg>
          <span class="build">v 1.1.948</span>
          <span class="epsg">EPSG:3857</span>
        </main>

        <aside class="right">
          <div v-for="r in tree" :key="r.label + r.kind" class="node" :class="{ child: r.level === 1 }">
            <svg class="tw" viewBox="0 0 12 12"><path :d="r.open ? 'M2 4.200L6 8 10 4.200' : 'M4.200 2.200L8 6 4.200 9.800'" /></svg>
            <svg class="check" :class="{ on: r.checked }" viewBox="0 0 24 24"><path :d="r.checked ? icons.boxChecked : icons.box" /></svg>
            <svg v-if="r.kind === 'group'" class="k-group" viewBox="0 0 21 20"><g fill="#808080" stroke="#3a3a38" stroke-width="1"><rect x=".5" y="8.500" width="11" height="11" /><rect x="4.500" y="4.500" width="11" height="11" /><rect x="8.500" y=".5" width="11" height="11" fill="#7c7d78" /></g></svg>
            <svg v-else-if="r.kind === 'polygon'" class="k-poly" viewBox="-.5 -.5 17 13"><path :d="polygonShape" /></svg>
            <svg v-else-if="r.kind === 'raster'" class="k-raster" viewBox="0 0 13 13" shape-rendering="crispEdges"><rect v-for="(c, i) in rasterCells" :key="i" :x="c[0] * 3.25" :y="c[1] * 3.25" width="3.300" height="3.300" :fill="c[2]" /></svg>
            <svg v-else-if="r.kind === 'points'" class="k-points" viewBox="0 0 14 14"><g fill="#8a8a8a" stroke="#333" stroke-width=".8"><circle cx="1.800" cy="11.500" r="1.200" /><circle cx="4" cy="4.500" r="1.200" /><circle cx="10.800" cy="2" r="1.200" /></g></svg>
            <svg v-else class="k-play" viewBox="0 0 20 20"><circle cx="10" cy="10" r="9" fill="none" stroke="#121212" stroke-width="1.500" /><path d="M8 5.500L13.500 10 8 14.500z" fill="#121212" /></svg>
            <span>{{ r.label }}</span>
          </div>
        </aside>
      </div>
      <div class="bottombar"></div>

      <div class="overlay">
        <div class="dialog">
          <div class="title">
            <h2>Pluvial scenario:</h2>
            <div class="name"><div class="input">RAIN172946</div><small>job name</small></div>
          </div>
          <div class="stepper">
            <template v-for="(s, i) in steps" :key="s.label">
              <i v-if="i" class="conn"></i>
              <div class="step" :class="s.state">
                <svg v-if="s.state === 'done'" class="bullet" viewBox="0 0 24 24"><circle cx="12" cy="12" r="12" fill="#4f38ee" /><path d="M5.500 12.300l4.300 4.200 8.700-8.800" fill="none" stroke="#fff" stroke-width="2.200" /></svg>
                <span v-else class="bullet num">{{ i + 1 }}</span>
                <div class="lbl"><span>{{ s.label }}</span><small v-if="s.state === 'todo'">Optional</small></div>
              </div>
            </template>
          </div>
          <div class="content">
            <p>Take into account the infiltration with the GreenAmpt model.</p>
            <label class="switch"><span class="track"><b></b></span>Enable GreenAmpt</label>
            <div class="select">
              <svg class="k-poly" viewBox="-.5 -.5 17 13"><path :d="polygonShape" /></svg>
              <span>inf_rate_161736</span>
              <svg class="caret" viewBox="0 0 24 24"><path d="M7 10l5 5 5-5z" /></svg>
            </div>
            <small class="helper">Infiltration Rate</small>
          </div>
          <div class="actions">
            <button class="cancel">CANCEL</button><span class="grow"></span>
            <button>BACK</button><button class="next">NEXT</button>
          </div>
        </div>
      </div>
    </div>
    <div class="behind"><span class="teal">domani sono giocabile nel tuo tour personale!<em>17:36 //</em></span><span class="pale"></span><span class="rest">out of</span></div>
  </div>
</template>

<style>
body { background: #000; overflow: hidden; }
</style>
<style scoped>
.page { width: 1842px; height: 1126px; overflow: hidden; background: #000; font: 16px/24px "Liberation Sans", Arial, sans-serif; letter-spacing: .15px; color: #121212; }
.window { position: relative; width: 1840px; height: 1122px; margin-left: 1px; background: #808080; border-radius: 0 0 18px 0; overflow: hidden; }
.topbar { height: 23px; background: #261c77; border-radius: 18px 18px 0 0; }
.header { position: relative; z-index: 1; height: 70px; display: flex; align-items: center; box-shadow: 0 2px 4px rgba(0,0,0,.3), 0 1px 8px rgba(0,0,0,.14); padding: 6px 0 0; box-sizing: border-box; background: #808080; }
.header > * { flex: none; }
.logo { margin: 0 0 0 27px; overflow: visible; }
.brand { font: 700 36px Lato, sans-serif; fill: #181818; letter-spacing: 0; }
.ico { width: 24px; height: 24px; flex: none; fill: currentColor; }
.back { fill: #281c78; margin-left: 27px; }
.project { margin-left: 25px; margin-top: 1px; width: 100px; color: #3a3a3a; }
.tools { display: flex; margin-left: 67px; color: #1e2060; }
.tool { width: 40px; height: 48px; display: flex; align-items: center; justify-content: center; }
.tool svg { width: 24px; height: 24px; fill: currentColor; }
.tool.big { width: 48px; }
.tool.big svg { width: 32px; height: 32px; }
.tool.active { background: #1e2060; color: #808080; border-radius: 6px; }
.tool.muted { color: #3b3b3b; }
.sep { width: 1px; background: #737373; }
.sep.wide { margin: 0 17px; }
.version { margin-left: 140px; width: 65px; color: #484848; letter-spacing: 0; }
.menu { margin-left: -3px; fill: #000; }
.body { height: 1005px; display: flex; }
.left { width: 399px; flex: none; display: flex; flex-direction: column; gap: 15px; padding: 6px 0 0 7px; box-sizing: border-box; }
.card { border-radius: 4px; border: 1px solid #757575; border-bottom-color: #505050; border-right: 0; box-sizing: border-box; box-shadow: 0 1px 1px rgba(0,0,0,.15); }
.sources { height: 227px; }
.row { height: 47px; border-bottom: 1px solid #6c6c6c; display: flex; align-items: center; padding: 0 16px; }
.row:last-child { border: 0; }
.row.head { height: 64px; border: 0; margin-bottom: 7px; }
.row span { flex: 1; margin-left: 16px; padding-bottom: 1px; }
.row.head span { padding-bottom: 2px; }
.violet { fill: #2a1c80; }
.layers { fill: none; stroke: #2a1c80; stroke-width: 2; }
.chev { fill: #3b3b3b; }
.source { display: flex; align-items: center; gap: 8px; height: 46px; padding-left: 25px; font-size: 14px; letter-spacing: .35px; color: #606060; }
.source svg { width: 20px; height: 20px; fill: currentColor; }
.source svg.line { fill: none; stroke: currentColor; stroke-width: 1.9; }
.map { position: relative; width: 1142px; height: 993px; margin-top: 6px; flex: none; box-sizing: border-box; border: solid #5c5c5c; border-width: 0 2px; }
.map svg { display: block; }
.place { font: 500 13px Roboto, sans-serif; fill: #7b7b7b; stroke: #101010; stroke-width: 2px; paint-order: stroke; letter-spacing: .1px; }
.place.green { fill: #3f6b4c; }
.district { font: 500 13px Roboto, sans-serif; fill: #777; stroke: #111; stroke-width: 2px; paint-order: stroke; letter-spacing: 1px; }
.shield { font: 700 9px Roboto, sans-serif; fill: #6f7f9a; letter-spacing: 0; }
.credit { font: 700 11px "DejaVu Sans", sans-serif; fill: #14262a; letter-spacing: .3px; }
.build { position: absolute; right: 0; top: 0; width: 43px; height: 20px; border-radius: 0 0 0 4px; background: #191f2a; font-size: 8px; line-height: 19px; text-align: center; color: #000; letter-spacing: 0; }
.epsg { position: absolute; right: 0; bottom: 0; width: 94px; height: 33px; box-sizing: border-box; border: solid #161616; border-width: 1px 0 0 1px; border-top-left-radius: 8px; background: rgba(112,112,112,.9); line-height: 31px; padding-left: 4px; white-space: nowrap; }
.right { flex: 1; padding-top: 6px; overflow: hidden; }
.node { height: 38px; display: flex; align-items: center; padding-left: 8px; white-space: nowrap; }
.node.child { padding-left: 25px; }
.node > svg { flex: none; }
.tw { width: 12px; height: 12px; fill: none; stroke: #121212; stroke-width: 1.8; margin: 0 8px 0 1px; }
.check { width: 20px; height: 20px; fill: #383838; margin-right: 11px; }
.node.child .check { margin-right: 9px; }
.check.on { fill: #261b7c; }
.k-group { width: 21px; height: 20px; }
.k-poly { width: 16px; height: 12px; fill: #767676; stroke: #3f3f3f; stroke-width: 1; }
.k-raster { width: 13px; height: 13px; margin: 2px 0 0 2px; }
.k-points { width: 14px; height: 14px; margin: 0 -1px 0 2px; }
.k-play { width: 20px; height: 20px; margin: 0 1px 0 2px; }
.bottombar { height: 24px; background: linear-gradient(90deg, #4f35ee 0, #4f3df0 10%, #5b76d4 42%, #66a6bd 68%, #70e69c 96%, #73ea9c); border-radius: 0 0 18px 18px; }
.overlay { position: absolute; inset: 0; z-index: 2; display: grid; place-items: center; }
.dialog { width: 900px; height: 900px; background: #fff; border-radius: 4px; box-sizing: border-box; display: flex; flex-direction: column; color: #212121; box-shadow: 0 11px 15px -7px rgba(0,0,0,.2), 0 24px 38px 3px rgba(0,0,0,.14), 0 9px 46px 8px rgba(0,0,0,.12); }
.title { display: flex; padding: 16px 24px 0; height: 88px; box-sizing: border-box; }
.title h2 { margin: 0; font-size: 20px; line-height: 31px; font-weight: 400; white-space: nowrap; }
.name { margin-left: 8px; width: 173px; display: flex; flex-direction: column; }
.input { height: 30px; line-height: 29px; border-bottom: 2px solid #c4c4c4; }
small { font-size: 12px; line-height: 20px; letter-spacing: .4px; color: #666; }
.name small { margin-top: 18px; }
.stepper { display: flex; align-items: center; padding: 0 24px; height: 72px; }
.step { display: flex; align-items: center; padding: 0 8px; flex: none; }
.conn { flex: 1; height: 1px; background: #bdbdbd; margin-top: -1px; }
.bullet { width: 24px; height: 24px; flex: none; margin-right: 8px; border-radius: 50%; }
.num { background: #9e9e9e; color: #fff; font-size: 12px; line-height: 25px; text-align: center; letter-spacing: 0; }
.active .num { background: #4f38ee; }
.lbl { display: flex; flex-direction: column; font-size: 14px; line-height: 20px; letter-spacing: .14px; color: #212121; }
.todo .lbl { color: #666; padding-bottom: 2px; }
.lbl small { line-height: 20px; margin-top: 3px; }
.content { flex: 1; padding: 6px 48px; }
.content p { margin: 0; color: #666; line-height: 24px; }
.switch { display: flex; align-items: center; height: 38px; }
.track { width: 34px; height: 14px; border-radius: 7px; background: #a79bf6; margin: 0 12px 0 1px; position: relative; }
.track b { position: absolute; right: -3px; top: -3px; width: 20px; height: 20px; border-radius: 50%; background: #4f38ee; box-shadow: 0 1px 2px rgba(0,0,0,.3); }
.select { position: relative; width: 250px; height: 57px; margin: 19px 0 0 24px; border: 2px solid #4f38ee; border-radius: 4px; box-sizing: border-box; display: flex; align-items: center; padding: 0 5px 2px 12px; }
.select::before { content: ""; position: absolute; left: 8px; top: -2px; width: 37px; height: 2px; background: #fff; }
.select span { flex: 1; }
.select .k-poly { margin-top: -6px; fill: #ddd; stroke: #777; }
.caret { width: 24px; height: 24px; fill: #757575; margin-top: 3px; }
.helper { display: block; margin: 18px 0 0 24px; }
.actions { display: flex; align-items: center; padding: 0 24px 24px; }
button { font: 14px/25px "Liberation Sans", Arial, sans-serif; letter-spacing: .4px; border: 0; background: none; color: #212121; padding: 5px 7px 5px 8px; height: 36px; }
.cancel { color: #d9262e; }
.grow { flex: 1; }
.next { border: 1px solid #a79bf6; border-radius: 4px; color: #4f38ee; width: 75px; margin-left: 21px; padding: 5px 0 5px 4px; }
.behind { height: 4px; display: flex; overflow: hidden; padding-left: 684px; font-size: 13px; line-height: 4px; color: #5d7d78; background: #0b0d10; font-weight: 700; white-space: nowrap; border-top: 1px solid #000; box-sizing: border-box; }
.teal { width: 397px; background: #05332e; padding-left: 10px; box-sizing: border-box; line-height: 1px; }
.teal em { font-style: normal; margin-left: 36px; }
.pale { margin-left: 16px; width: 226px; background: #555; }
.rest { margin-left: 45px; color: #2a2a2a; line-height: 1px; }
</style>
